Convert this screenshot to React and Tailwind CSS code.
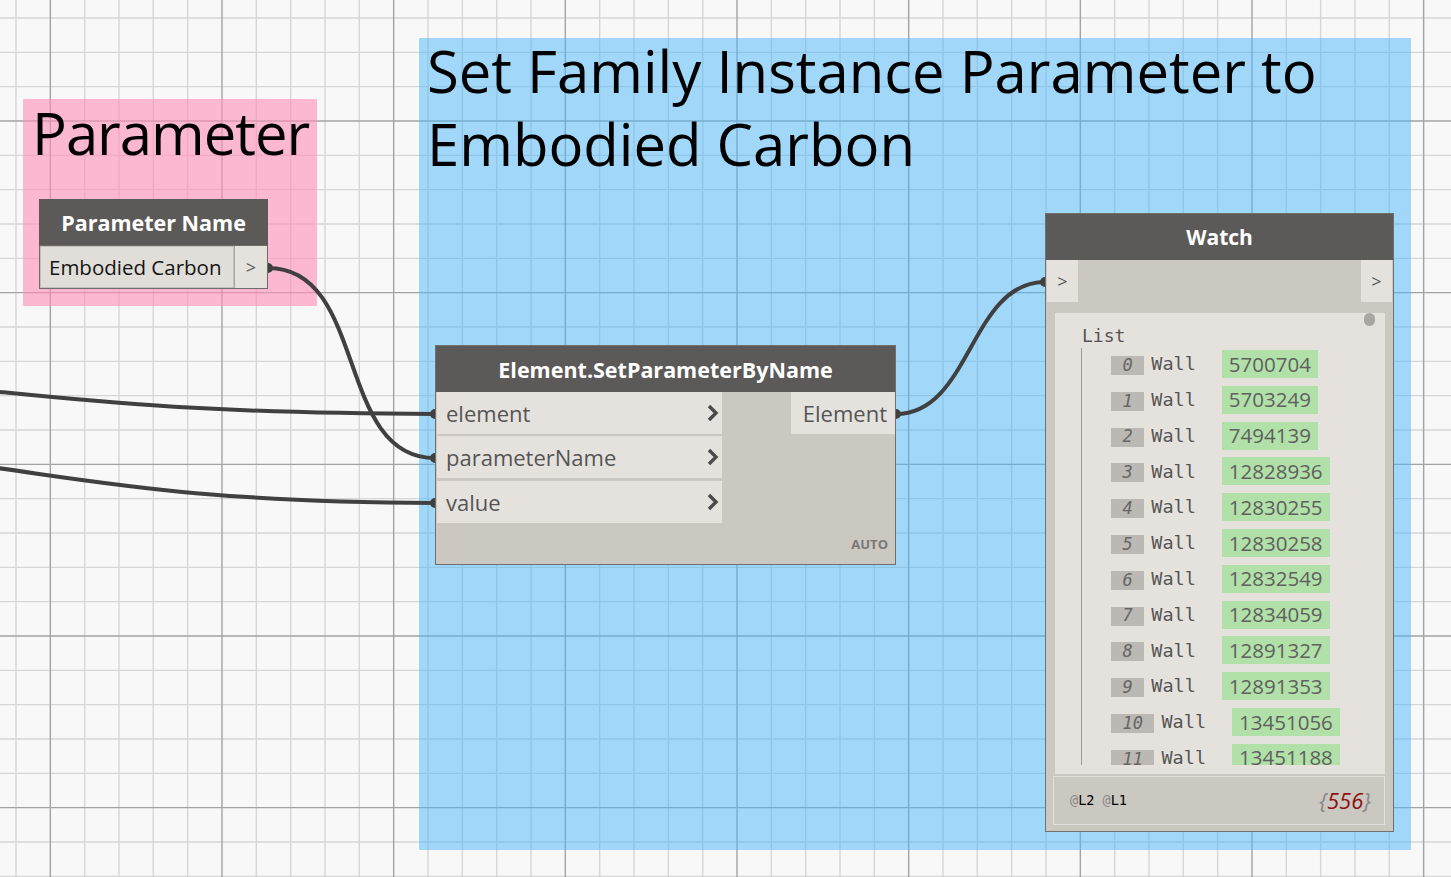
import React from 'react'

const SANS = "font-['Open_Sans',sans-serif]"
const MONO = "font-['DejaVu_Sans_Mono',monospace]"

const items = [
  ['0', '5700704'],
  ['1', '5703249'],
  ['2', '7494139'],
  ['3', '12828936'],
  ['4', '12830255'],
  ['5', '12830258'],
  ['6', '12832549'],
  ['7', '12834059'],
  ['8', '12891327'],
  ['9', '12891353'],
  ['10', '13451056'],
  ['11', '13451188'],
]

const Grid = () => {
  const step = 34.333
  const xs = []
  const ys = []
  for (let i = 0; 16 + i * step < 1460; i++) xs.push({ v: 16 + i * step, major: (i - 1) % 5 === 0 })
  for (let j = 0; 18 + j * step < 890; j++) ys.push({ v: 18 + j * step, major: j % 5 === 3 })
  return (
    <svg className="absolute inset-0" width="1451" height="877">
      {xs.filter((l) => !l.major).map((l, i) => (
        <line key={'vx' + i} x1={l.v} y1="0" x2={l.v} y2="877" stroke="#d6d6d6" strokeWidth="1.4" />
      ))}
      {ys.filter((l) => !l.major).map((l, i) => (
        <line key={'hy' + i} x1="0" y1={l.v} x2="1451" y2={l.v} stroke="#d6d6d6" strokeWidth="1.4" />
      ))}
      {xs.filter((l) => l.major).map((l, i) => (
        <line key={'mx' + i} x1={l.v} y1="0" x2={l.v} y2="877" stroke="#a3a3a3" strokeWidth="1.4" />
      ))}
      {ys.filter((l) => l.major).map((l, i) => (
        <line key={'my' + i} x1="0" y1={l.v} x2="1451" y2={l.v} stroke="#a3a3a3" strokeWidth="1.4" />
      ))}
    </svg>
  )
}

const Wires = () => (
  <svg className="absolute inset-0" width="1451" height="877" fill="none">
    <g stroke="#404040" strokeWidth="4">
      <path d="M-10 391 C100 402, 200 413, 435 414" />
      <path d="M-10 467 C100 482, 200 502, 435 503" />
      <path d="M268 268 C368 268, 335 458, 435 458" />
      <path d="M896 414 C971 414, 970 282, 1045 282" />
    </g>
    <g fill="#404040">
      <circle cx="268" cy="268" r="5" />
      <circle cx="435" cy="414" r="5" />
      <circle cx="435" cy="458" r="5" />
      <circle cx="435" cy="503" r="5" />
      <circle cx="896" cy="414" r="5" />
      <circle cx="1045" cy="282" r="5" />
    </g>
  </svg>
)

const Chevron = () => (
  <svg width="14" height="18" viewBox="0 0 14 18" fill="none">
    <path d="M3 2 L10 9 L3 16" stroke="#4a4a4a" strokeWidth="3.4" strokeLinejoin="miter" />
  </svg>
)

const InputRow = ({ label, className = '' }) => (
  <div className={`h-[42px] flex items-center justify-between pl-[9px] pr-[2px] bg-[#e5e2de] ${className}`}>
    <span className="text-[22px] text-[#555]">{label}</span>
    <Chevron />
  </div>
)

export default function App() {
  return (
    <div className={`relative w-[1451px] h-[877px] overflow-hidden bg-[#f8f8f8] ${SANS}`}>
      <Grid />

      {/* Groups */}
      <div className="absolute left-[23px] top-[99px] w-[294px] h-[207px] bg-[rgba(255,141,183,0.6)]">
        <div className="pl-[9px] -mt-[3px] text-[58px] leading-[73px] tracking-[-1px] text-black">Parameter</div>
      </div>
      <div className="absolute left-[419px] top-[38px] w-[992px] h-[812px] bg-[rgba(74,184,252,0.5)]">
        <div className="pl-[8px] -mt-[4px] text-[58px] leading-[73px] text-black">
          Set Family Instance Parameter to
          <br />
          Embodied Carbon
        </div>
      </div>

      <Wires />

      {/* Parameter Name node */}
      <div className="absolute left-[39px] top-[199px] w-[229px] h-[90px] flex flex-col">
        <div className="h-[46px] pt-[3px] bg-[#5c5a58] flex items-center justify-center text-white font-bold text-[21.5px]">
          Parameter Name
        </div>
        <div className="flex-1 flex bg-[#cbc7c1] border border-[#6e6c6a]">
          <div className="w-[194px] flex items-center pl-[8px] bg-[#e1ded9] border border-[#c4c0ba] text-[20.5px] text-[#151515]">
            Embodied Carbon
          </div>
          <div className="flex-1 flex items-center justify-center bg-[#e5e2de] border-l border-[#aaa6a1] text-[18px] text-[#555]">
            &gt;
          </div>
        </div>
      </div>

      {/* Element.SetParameterByName node */}
      <div className="absolute left-[435px] top-[345px] w-[461px] h-[220px] flex flex-col bg-[#cbc7c1] border border-[#72706e]">
        <div className="h-[46px] pt-[2px] bg-[#5c5a58] flex items-center justify-center text-white font-bold text-[21.5px]">
          Element.SetParameterByName
        </div>
        <div className="flex-1 flex justify-between relative">
          <div className="w-[285px] ml-[1px] flex flex-col">
            <InputRow label="element" />
            <InputRow label="parameterName" className="mt-[2px]" />
            <InputRow label="value" className="mt-[3px]" />
          </div>
          <div className="w-[104px] h-[42px] bg-[#e5e2de] flex items-center justify-end pr-[8px] text-[22px] text-[#555]">
            Element
          </div>
          <div className="absolute right-[7px] bottom-[10px] text-[13px] font-bold text-[#7a7876]">AUTO</div>
        </div>
      </div>

      {/* Watch node */}
      <div className="absolute left-[1045px] top-[213px] w-[349px] h-[619px] flex flex-col bg-[#cbc7c1] border border-[#72706e]">
        <div className="h-[46px] shrink-0 pt-[2px] bg-[#5c5a58] flex items-center justify-center text-white font-bold text-[21px]">
          Watch
        </div>
        <div className="h-[42px] shrink-0 flex justify-between">
          <div className="w-[31px] ml-[1px] bg-[#e5e2de] flex items-center justify-center text-[18px] text-[#555]">&gt;</div>
          <div className="w-[31px] mr-[1px] bg-[#e5e2de] flex items-center justify-center text-[18px] text-[#555]">&gt;</div>
        </div>
        <div className="mt-[11px] ml-[9px] mr-[8px] h-[461px] shrink-0 bg-[#e5e2de] relative overflow-hidden">
          <div className="absolute right-[10px] top-0 w-[11px] h-[13px] rounded-full bg-[#aaa7a3]" />
          <div className={`pl-[27px] pt-[13px] h-[35px] text-[18px] leading-[20px] text-[#555] ${MONO}`}>List</div>
          <div className="ml-[26px] h-[417px] border-l border-[#9d9a96] overflow-hidden pl-[29px] pt-[2px] flex flex-col gap-[7.8px]">
            {items.map(([idx, val]) => (
              <div key={idx} className="h-[28px] shrink-0 flex items-center">
                <div className={`mt-[3px] h-[19px] px-[11.5px] bg-[#bcb8b3] flex items-center italic text-[17px] text-[#666] ${MONO}`}>
                  {idx}
                </div>
                <div className={`ml-[7px] text-[18.5px] text-[#555] ${MONO}`}>Wall</div>
                <div className="ml-[26px] h-[28px] px-[7px] bg-[#b1e0a8] flex items-center text-[20.5px] text-[#606060]">
                  {val}
                </div>
              </div>
            ))}
          </div>
        </div>
        <div className="mt-[2px] ml-[7px] mr-[8px] h-[49px] shrink-0 border border-[#e2dfda] flex items-center justify-between pl-[16px] pr-[13px]">
          <div className={`text-[13.5px] text-black ${MONO}`}>
            <span className="text-[#888]">@</span>L2 <span className="text-[#888]">@</span>L1
          </div>
          <div className="italic text-[22px] text-[#888]">
            {'{'}
            <span className="text-[#8b1111]">556</span>
            {'}'}
          </div>
        </div>
      </div>
    </div>
  )
}
